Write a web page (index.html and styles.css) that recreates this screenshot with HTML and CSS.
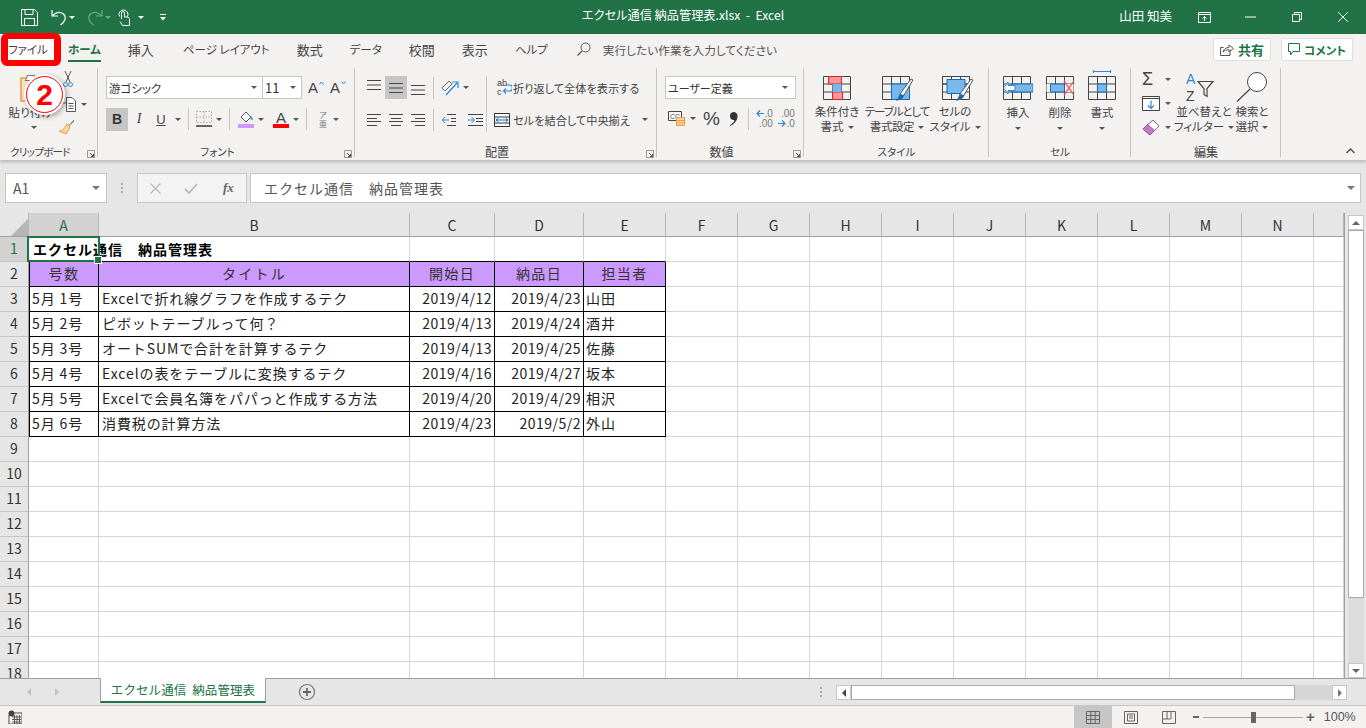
FILE: index.html
```html
<!DOCTYPE html>
<html lang="ja">
<head>
<meta charset="UTF-8">
<title>エクセル通信 納品管理表.xlsx - Excel</title>
<link rel="stylesheet" href="styles.css">
</head>
<body>
<svg class="defs" width="0" height="0">
  <symbol id="launch" viewBox="0 0 8 8"><path d="M.5 7.5V.5h7v7z" fill="none" stroke="#999"/><path d="M3 3l3.5 3.5M6.5 4v2.5H4" fill="none" stroke="#555"/></symbol>
  <symbol id="al-top" viewBox="0 0 14 14"><path d="M0 1.5h14M0 6h14M0 10.500h14" stroke="#444" fill="none"/></symbol>
  <symbol id="al-left" viewBox="0 0 14 14"><path d="M0 1.500h14M0 5.500h10M0 8.500h14M0 12.500h10" stroke="#444" fill="none"/></symbol>
  <symbol id="al-center" viewBox="0 0 14 14"><path d="M0 1.500h14M2 5.500h10M0 8.500h14M2 12.500h10" stroke="#444" fill="none"/></symbol>
  <symbol id="al-right" viewBox="0 0 14 14"><path d="M0 1.500h14M4 5.500h10M0 8.500h14M4 12.500h10" stroke="#444" fill="none"/></symbol>
  <symbol id="cells" viewBox="0 0 28 24"><path d="M.5.500h27v23H.5zM.5 8h27M.5 16h27M9.500.500v23M18.500.500v23" fill="none" stroke="#444"/></symbol>
</svg>

<header class="titlebar">
  <div class="qat">
    <svg width="17" height="17" viewBox="0 0 17 17"><path d="M.5.500h13l3 3v13H.5zM4 .5v5h8v-5M3.500 16.500v-7h10v7" fill="none" stroke="#fff"/></svg>
    <svg class="q-undo" width="16" height="17" viewBox="0 0 16 17"><path d="M1 1v6h6M1.500 7C4 3 9 2.500 12.500 5c3 3 2 7.500-3 11" fill="none" stroke="#fff" stroke-width="1.200"/></svg>
    <i class="dd white"></i>
    <svg class="q-redo" width="16" height="17" viewBox="0 0 16 17"><path d="M15 1v6H9M14.500 7C12 3 7 2.500 3.500 5c-3 3-2 7.500 3 11" fill="none" stroke="#6fa68a" stroke-width="1.200"/></svg>
    <i class="dd dim"></i>
    <svg class="q-touch" width="12" height="17" viewBox="0 0 12 17"><path d="M1.500 7.500a4.500 4.500 0 118 0M3.500 10V4a1.500 1.500 0 013 0v4h2.500c1.500 0 2.500 1 2.500 2.500v6h-7L2 12.500" fill="none" stroke="#fff"/></svg>
    <i class="dd white"></i>
    <svg class="q-more" width="8" height="8" viewBox="0 0 8 8"><path d="M1 1.500h6" stroke="#fff"/><path d="M1 4h6L4 7.500z" fill="#fff"/></svg>
  </div>
  <div class="doc-title">エクセル通信 納品管理表.xlsx &nbsp;-&nbsp; Excel</div>
  <div class="win">
    <span class="user">山田 知美</span>
    <svg class="w-ribbon" width="13" height="11" viewBox="0 0 13 11"><path d="M.5.500h12v10H.5zM.5 2.500h12M6.500 9V4.500M4.500 6.500l2-2 2 2" fill="none" stroke="#fff"/></svg>
    <svg class="w-min" width="11" height="2" viewBox="0 0 11 2"><path d="M0 1h11" stroke="#fff"/></svg>
    <svg class="w-max" width="10" height="10" viewBox="0 0 10 10"><path d="M.5 2.500h7v7h-7zM2.500 2.500v-2h7v7h-2" fill="none" stroke="#fff"/></svg>
    <svg class="w-close" width="10" height="10" viewBox="0 0 10 10"><path d="M0 0l10 10M10 0L0 10" stroke="#fff"/></svg>
  </div>
</header>

<nav class="tabs">
  <span class="tab kn file">ファイル</span>
  <span class="tab kn on">ホーム</span>
  <span class="tab">挿入</span>
  <span class="tab kn page">ページ レイアウト</span>
  <span class="tab">数式</span>
  <span class="tab kn">データ</span>
  <span class="tab">校閲</span>
  <span class="tab">表示</span>
  <span class="tab kn">ヘルプ</span>
  <span class="tell">
    <svg width="14" height="14" viewBox="0 0 14 14"><circle cx="8.500" cy="5.500" r="4.500" fill="none" stroke="#555"/><path d="M5 9l-4.500 4.500" stroke="#555" stroke-width="1.300"/></svg>
    実行したい作業を入力してください
  </span>
  <span class="tab-btns">
    <span class="tbtn t-share"><svg width="14" height="13" viewBox="0 0 14 13"><path d="M10 6.500v6H.5v-8h3M3 9c.5-3 3-4.500 6-4.500V2l4.500 3.500L9 9V6.800C6.500 6.800 4.500 7.500 3 9z" fill="none" stroke="#555"/></svg>共有</span>
    <span class="tbtn t-comment"><svg width="12" height="13" viewBox="0 0 12 13"><path d="M.5.500h11v8H5L2.500 12V8.500h-2z" fill="none" stroke="#217346"/></svg>コメント</span>
  </span>
</nav>

<section class="ribbon">
  <div class="group g-clip">
    <div class="body clip">
      <div class="paste">
        <svg width="22" height="28" viewBox="0 0 22 28"><path d="M1 4h20v23H1z" fill="#fbe3c4" stroke="#ed9a3c" stroke-width="1.500"/><path d="M7 4V1.500h8V4l2 2.500H5z" fill="#fff" stroke="#777"/></svg>
        <span class="lbl">貼り付け</span>
        <i class="dd"></i>
      </div>
      <div class="clip-small">
        <svg width="10" height="17" viewBox="0 0 10 17"><path d="M2 0l5 11M8 0L3 11" stroke="#555" fill="none"/><circle cx="2.500" cy="13.500" r="2" fill="none" stroke="#2b88d8"/><circle cx="7.500" cy="13.500" r="2" fill="none" stroke="#2b88d8"/></svg>
        <span class="copy"><svg width="16" height="15" viewBox="0 0 16 15"><path d="M6.500.500H12l3.500 3.500v10.500h-9zM8.500 6.500h5M8.500 9h5M8.500 11.500h5M1 6h5" fill="#fff" stroke="#555"/></svg><i class="dd"></i></span>
        <svg width="17" height="16" viewBox="0 0 17 16"><path d="M10 7l5.500-6 1 1-6 5.500z" fill="#777"/><path d="M9 5l3 3-4 7-7-3c2 0 5-1 8-7z" fill="#fbd5a5" stroke="#ed9a3c"/></svg>
      </div>
    </div>
    <div class="foot has-launch"><span></span><span class="kn-s long">クリップボード</span><svg class="launch"><use href="#launch"/></svg></div>
  </div>

  <div class="group g-font">
    <div class="body stack">
      <div class="row row-a">
        <span class="select s-font">游ゴシック<i class="dd"></i></span>
        <span class="select s-size">11<i class="dd"></i></span>
        <span class="grow">A<svg width="5" height="4" viewBox="0 0 5 4"><path d="M.5 3.500l2-2.500 2 2.500" fill="none" stroke="#2b88d8"/></svg></span>
        <span class="grow">A<svg width="5" height="4" viewBox="0 0 5 4"><path d="M.5.500l2 2.500 2-2.500" fill="none" stroke="#2b88d8"/></svg></span>
      </div>
      <div class="row row-b">
        <span class="ibtn sel bold">B</span>
        <span class="ibtn ital">I</span>
        <span class="ibtn under">U</span><i class="dd"></i>
        <b class="sep"></b>
        <svg class="bd-ic" width="16" height="16" viewBox="0 0 16 16"><path d="M.5.500h15v11H.5zM8 .5v11M.5 6h15" fill="none" stroke="#aaa" stroke-dasharray="1.500 1.500"/><path d="M0 15h16" stroke="#333" stroke-width="1.500"/></svg><i class="dd"></i>
        <b class="sep"></b>
        <svg class="fill-ic" width="16" height="18" viewBox="0 0 16 18"><path d="M3 7l5-5 5 5-5 5z" fill="#fff" stroke="#555"/><path d="M13 6c1.500 2 2 3 1.500 4.500L12 8z" fill="#2b88d8"/><path d="M0 14h16v4H0z" fill="#cc99ff"/></svg><i class="dd"></i>
        <span class="font-col">A</span><i class="dd"></i>
        <b class="sep"></b>
        <span class="furi">ア<em>亜</em></span><i class="dd"></i>
      </div>
    </div>
    <div class="foot has-launch"><span></span><span class="kn-s">フォント</span><svg class="launch"><use href="#launch"/></svg></div>
  </div>

  <div class="group g-align">
    <div class="body al">
      <div class="al-left">
        <div class="row">
          <span class="ibtn up"><svg width="14" height="14"><use href="#al-top"/></svg></span>
          <span class="ibtn sel"><svg width="14" height="14"><use href="#al-top"/></svg></span>
          <span class="ibtn low"><svg width="14" height="14"><use href="#al-top"/></svg></span>
          <b class="sep"></b>
          <svg class="ori" width="18" height="18" viewBox="0 0 18 18"><path d="M1 9l7-7 3 3-7 7z" fill="none" stroke="#666"/><path d="M5 16L16 4M11 3h6v6" fill="none" stroke="#2b88d8" stroke-width="1.200"/></svg><i class="dd"></i>
        </div>
        <div class="row">
          <span class="ibtn"><svg width="14" height="14"><use href="#al-left"/></svg></span>
          <span class="ibtn"><svg width="14" height="14"><use href="#al-center"/></svg></span>
          <span class="ibtn"><svg width="14" height="14"><use href="#al-right"/></svg></span>
          <b class="sep"></b>
          <svg class="ind" width="15" height="14" viewBox="0 0 15 14"><path d="M6 1.500h9M10 5.500h5M10 8.500h5M6 12.500h9" stroke="#444" fill="none"/><path d="M8 7H1M4 4L1 7l3 3" stroke="#2b88d8" fill="none"/></svg>
          <svg class="ind" width="15" height="14" viewBox="0 0 15 14"><path d="M0 1.500h15M8 5.500h7M8 8.500h7M0 12.500h15" stroke="#444" fill="none"/><path d="M0 7h6M3.500 4L6.500 7l-3 3" stroke="#2b88d8" fill="none"/></svg>
        </div>
      </div>
      <div class="al-right">
        <div class="row wrap-row">
          <svg width="15" height="17" viewBox="0 0 15 17"><path d="M9 6h3.500a2 2 0 010 6H7M9 9.500L6.500 12 9 14.500" fill="none" stroke="#2b88d8" stroke-width="1.200"/><text x="0" y="7" font-size="9" fill="#444" font-family="Liberation Sans">ab</text><text x="0" y="16" font-size="9" fill="#444" font-family="Liberation Sans">c</text></svg>
          <span class="al-txt">折り返して全体を表示する</span>
        </div>
        <div class="row merge-row">
          <svg width="16" height="14" viewBox="0 0 16 14"><path d="M.5.500h15v13H.5z" fill="#fff" stroke="#333"/><path d="M.5 4h15M.5 10h15" stroke="#333"/><path d="M2 7h12M4.500 5L2 7l2.500 2M11.500 5L14 7l-2.500 2" fill="none" stroke="#0f6cbd"/></svg>
          <span class="al-txt">セルを結合して中央揃え</span><i class="dd"></i>
        </div>
      </div>
    </div>
    <div class="foot has-launch"><span></span><span>配置</span><svg class="launch"><use href="#launch"/></svg></div>
  </div>

  <div class="group g-num">
    <div class="body stack">
      <div class="row"><span class="select s-num">ユーザー定義<i class="dd"></i></span></div>
      <div class="row row-num">
        <svg width="17" height="15" viewBox="0 0 17 15"><path d="M.5.500h13v9H.5z" fill="#fff" stroke="#444"/><text x="2" y="8" font-size="7" fill="#444" font-family="Liberation Sans">CC</text><path d="M8.500 6.500h8v8h-8z" fill="#fbd5a5" stroke="#ed9a3c"/><path d="M8.500 9.500h8M8.500 12h8" stroke="#ed9a3c"/></svg><i class="dd"></i>
        <span class="pct">%</span>
        <svg class="comma" width="9" height="14" viewBox="0 0 9 14"><path d="M4.500 0a4 4 0 014 4.500C8.500 8.500 5 12 1.500 14l-.5-.8C3.500 11.500 5 10 5.500 8A4 4 0 114.500 0z" fill="#333"/></svg>
        <b class="sep"></b>
        <span class="dec">
          <span class="d-t"><svg width="8" height="7" viewBox="0 0 8 7"><path d="M8 3.500H1M4 .5l-3 3 3 3" fill="none" stroke="#2b88d8" stroke-width="1.200"/></svg>.0</span>
          <span class="d-g">.00</span>
        </span>
        <span class="dec">
          <span class="d-g">.00</span>
          <span class="d-t"><svg width="8" height="7" viewBox="0 0 8 7"><path d="M0 3.500h7M4 .5l3 3-3 3" fill="none" stroke="#2b88d8" stroke-width="1.200"/></svg>.0</span>
        </span>
      </div>
    </div>
    <div class="foot has-launch"><span></span><span>数値</span><svg class="launch"><use href="#launch"/></svg></div>
  </div>

  <div class="group g-style">
    <div class="body bigs">
      <div class="big b1">
        <svg width="28" height="24" viewBox="0 0 28 24"><use href="#cells"/><path d="M5.500.500h13V8h-13zM9.500 16h10v7.500h-10z" fill="#ff9999" stroke="#e02020"/><path d="M9.500 8h9v8h-9z" fill="#7ab7ea"/></svg>
        <span class="lbl">条件付き<br>書式<i class="dd"></i></span>
      </div>
      <div class="big b2">
        <svg width="32" height="26" viewBox="0 0 32 26"><use href="#cells" width="28" height="24"/><path d="M9.500 8h18v15.500h-18z" fill="#7ab7ea" stroke="#0f6cbd"/><path d="M18 18L29 3l2 1-9 15c-1 4-5 5-8 5 3-1 3-4 4-6z" fill="#fff" stroke="#555"/><path d="M18 18c-1 2-1 5-4 6 3 0 7-1 8-5z" fill="#0f6cbd"/></svg>
        <span class="lbl tight">テーブルとして<br>書式設定<i class="dd"></i></span>
      </div>
      <div class="big b3">
        <svg width="32" height="26" viewBox="0 0 32 26"><use href="#cells" width="28" height="24"/><path d="M.5.500h27V8H.5z" fill="none" stroke="#444"/><path d="M5 3.500h18v14H5z" fill="#7ab7ea" stroke="#0f6cbd"/><path d="M18 18L29 3l2 1-9 15c-1 4-5 5-8 5 3-1 3-4 4-6z" fill="#fff" stroke="#555"/><path d="M18 18c-1 2-1 5-4 6 3 0 7-1 8-5z" fill="#0f6cbd"/></svg>
        <span class="lbl">セルの<br>スタイル<i class="dd"></i></span>
      </div>
    </div>
    <div class="foot"><span></span><span class="kn-s">スタイル</span><span></span></div>
  </div>

  <div class="group g-cell">
    <div class="body bigs">
      <div class="big c1">
        <svg width="30" height="24" viewBox="0 0 30 24"><use href="#cells" width="28" height="24"/><path d="M8 8h22v8H8z" fill="#7ab7ea" stroke="#0f6cbd"/><path d="M12 9.500H5V6L.5 12 5 18v-3.500h7z" fill="#fff" stroke="#2b88d8"/></svg>
        <span class="lbl">挿入</span><i class="dd"></i>
      </div>
      <div class="big c2">
        <svg width="28" height="24" viewBox="0 0 28 24"><use href="#cells"/><path d="M.5 8h27v8H.5z" fill="#f3f2f1"/><path d="M4.500 8h14v8h-14z" fill="#7ab7ea" stroke="#0f6cbd"/><path d="M18 5l10 14M28 5L18 19" stroke="#f25c5c" stroke-width="1.300"/></svg>
        <span class="lbl">削除</span><i class="dd"></i>
      </div>
      <div class="big c3">
        <svg width="28" height="30" viewBox="0 0 28 30"><path d="M5.500 0v3M22.500 0v3M5.500 1.500h17" stroke="#2b88d8" fill="none"/><use href="#cells" y="6" width="28" height="24"/><path d="M9.500 14h9v8h-9z" fill="#7ab7ea" stroke="#0f6cbd"/></svg>
        <span class="lbl">書式</span><i class="dd"></i>
      </div>
    </div>
    <div class="foot"><span></span><span class="kn-s">セル</span><span></span></div>
  </div>

  <div class="group g-edit">
    <div class="body edit">
      <div class="edit-small">
        <span class="es"><span class="sum">Σ</span><i class="dd"></i></span>
        <span class="es"><svg width="18" height="15" viewBox="0 0 18 15"><path d="M.5.500h17v14H.5zM.5 2.500h17" fill="#fff" stroke="#444"/><path d="M9 4.500v8M6 9.500l3 3 3-3" fill="none" stroke="#2b88d8" stroke-width="1.200"/></svg><i class="dd"></i></span>
        <span class="es"><svg width="18" height="17" viewBox="0 0 18 17"><path d="M11 1l6 6-9 9-7-6z" fill="#fff" stroke="#a64ca6"/><path d="M5.500 5.500l7 6L8 16l-7-6z" fill="#c27cc2" stroke="#a64ca6"/></svg><i class="dd"></i></span>
      </div>
      <div class="big e1">
        <svg width="32" height="30" viewBox="0 0 32 30"><text x="0" y="12" font-size="14" fill="#2b88d8" font-family="Liberation Sans">A</text><text x="0" y="29" font-size="14" fill="#444" font-family="Liberation Sans">Z</text><path d="M12 9.500h15l-6 7v8l-3-2v-6z" fill="none" stroke="#444" stroke-width="1.200"/></svg>
        <span class="lbl">並べ替えと<br>フィルター<i class="dd"></i></span>
      </div>
      <div class="big e2">
        <svg width="32" height="30" viewBox="0 0 32 30"><circle cx="21" cy="10" r="9.500" fill="#fff" stroke="#444"/><path d="M14 17L1 29.500" stroke="#444" stroke-width="1.200"/></svg>
        <span class="lbl">検索と<br>選択<i class="dd"></i></span>
      </div>
    </div>
    <div class="foot"><span></span><span>編集</span><span></span></div>
  </div>

  <div class="collapse"><svg width="9" height="6" viewBox="0 0 9 6"><path d="M.5 5l4-4 4 4" fill="none" stroke="#555" stroke-width="1.500"/></svg></div>
</section>

<section class="formula">
  <div class="namebox">A1<i class="dd big-dd"></i></div>
  <div class="dots"></div>
  <div class="fx-btns">
    <svg width="11" height="11" viewBox="0 0 11 11"><path d="M.5.500l10 10M10.500.500l-10 10" stroke="#bbb" stroke-width="1.300"/></svg>
    <svg width="14" height="11" viewBox="0 0 14 11"><path d="M1 6l4 4 8-9" fill="none" stroke="#bbb" stroke-width="1.800"/></svg>
    <span class="fx">fx</span>
  </div>
  <div class="fbar">エクセル通信　納品管理表<i class="dd big-dd"></i></div>
</section>

<main class="sheet">
  <div class="grid-wrap">
    <table class="grid">
      <colgroup><col class="c-h"><col class="c-a"><col class="c-b"><col class="c-c"><col class="c-d"><col class="c-e"><col class="c-n"><col class="c-n"><col class="c-n"><col class="c-n"><col class="c-n"><col class="c-n"><col class="c-n"><col class="c-n"><col class="c-n"><col class="c-z"></colgroup>
      <tr class="heads"><th class="corner"><svg width="17" height="17" viewBox="0 0 17 17"><path d="M17 0v17H0z" fill="#b5b5b5"/></svg></th><th class="cur">A</th><th>B</th><th>C</th><th>D</th><th>E</th><th>F</th><th>G</th><th>H</th><th>I</th><th>J</th><th>K</th><th>L</th><th>M</th><th>N</th><th></th></tr>
      <tr><th class="cur">1</th><td class="active title under-b">エクセル通信　納品管理表<span class="selbox"></span></td><td class="under-b no-l"></td><td class="under-b"></td><td class="under-b"></td><td class="under-b"></td><td></td><td></td><td></td><td></td><td></td><td></td><td></td><td></td><td></td><td></td></tr>
      <tr class="tbl hd"><th>2</th><td>号数</td><td>タイトル</td><td>開始日</td><td>納品日</td><td>担当者</td><td></td><td></td><td></td><td></td><td></td><td></td><td></td><td></td><td></td><td></td></tr>
      <tr class="tbl"><th>3</th><td>5月 1号</td><td>Excelで折れ線グラフを作成するテク</td><td class="r">2019/4/12</td><td class="r">2019/4/23</td><td>山田</td><td></td><td></td><td></td><td></td><td></td><td></td><td></td><td></td><td></td><td></td></tr>
      <tr class="tbl"><th>4</th><td>5月 2号</td><td>ピボットテーブルって何？</td><td class="r">2019/4/13</td><td class="r">2019/4/24</td><td>酒井</td><td></td><td></td><td></td><td></td><td></td><td></td><td></td><td></td><td></td><td></td></tr>
      <tr class="tbl"><th>5</th><td>5月 3号</td><td>オートSUMで合計を計算するテク</td><td class="r">2019/4/13</td><td class="r">2019/4/25</td><td>佐藤</td><td></td><td></td><td></td><td></td><td></td><td></td><td></td><td></td><td></td><td></td></tr>
      <tr class="tbl"><th>6</th><td>5月 4号</td><td>Excelの表をテーブルに変換するテク</td><td class="r">2019/4/16</td><td class="r">2019/4/27</td><td>坂本</td><td></td><td></td><td></td><td></td><td></td><td></td><td></td><td></td><td></td><td></td></tr>
      <tr class="tbl"><th>7</th><td>5月 5号</td><td>Excelで会員名簿をパパっと作成する方法</td><td class="r">2019/4/20</td><td class="r">2019/4/29</td><td>相沢</td><td></td><td></td><td></td><td></td><td></td><td></td><td></td><td></td><td></td><td></td></tr>
      <tr class="tbl"><th>8</th><td>5月 6号</td><td>消費税の計算方法</td><td class="r">2019/4/23</td><td class="r">2019/5/2</td><td>外山</td><td></td><td></td><td></td><td></td><td></td><td></td><td></td><td></td><td></td><td></td></tr>
      <tr><th>9</th><td></td><td></td><td></td><td></td><td></td><td></td><td></td><td></td><td></td><td></td><td></td><td></td><td></td><td></td><td></td></tr>
      <tr><th>10</th><td></td><td></td><td></td><td></td><td></td><td></td><td></td><td></td><td></td><td></td><td></td><td></td><td></td><td></td><td></td></tr>
      <tr><th>11</th><td></td><td></td><td></td><td></td><td></td><td></td><td></td><td></td><td></td><td></td><td></td><td></td><td></td><td></td><td></td></tr>
      <tr><th>12</th><td></td><td></td><td></td><td></td><td></td><td></td><td></td><td></td><td></td><td></td><td></td><td></td><td></td><td></td><td></td></tr>
      <tr><th>13</th><td></td><td></td><td></td><td></td><td></td><td></td><td></td><td></td><td></td><td></td><td></td><td></td><td></td><td></td><td></td></tr>
      <tr><th>14</th><td></td><td></td><td></td><td></td><td></td><td></td><td></td><td></td><td></td><td></td><td></td><td></td><td></td><td></td><td></td></tr>
      <tr><th>15</th><td></td><td></td><td></td><td></td><td></td><td></td><td></td><td></td><td></td><td></td><td></td><td></td><td></td><td></td><td></td></tr>
      <tr><th>16</th><td></td><td></td><td></td><td></td><td></td><td></td><td></td><td></td><td></td><td></td><td></td><td></td><td></td><td></td><td></td></tr>
      <tr><th>17</th><td></td><td></td><td></td><td></td><td></td><td></td><td></td><td></td><td></td><td></td><td></td><td></td><td></td><td></td><td></td></tr>
      <tr><th>18</th><td></td><td></td><td></td><td></td><td></td><td></td><td></td><td></td><td></td><td></td><td></td><td></td><td></td><td></td><td></td></tr>
    </table>
  </div>
  <div class="vscroll">
    <span class="sbtn"><i class="tri-up"></i></span>
    <span class="vthumb"></span>
    <span class="vtrack"></span>
    <span class="sbtn"><i class="tri-down"></i></span>
  </div>
</main>

<section class="sheetbar">
  <div class="nav-arrows"><i class="tri-left"></i><i class="tri-right gray"></i></div>
  <div class="sheet-tab">エクセル通信&nbsp; 納品管理表</div>
  <svg class="add" width="18" height="18" viewBox="0 0 18 18"><circle cx="9" cy="9" r="7.500" fill="none" stroke="#777" stroke-width="1.200"/><path d="M9 5v8M5 9h8" stroke="#666" stroke-width="1.800"/></svg>
  <div class="dots small"></div>
  <div class="hscroll">
    <span class="sbtn h"><i class="tri-left dark"></i></span>
    <span class="hthumb"></span>
    <span class="htrack"></span>
    <span class="sbtn h"><i class="tri-right dark"></i></span>
  </div>
</section>

<footer class="status">
  <svg class="macro" width="14" height="14" viewBox="0 0 14 14"><path d="M3 3h11v11H1V5" fill="#fff" stroke="#444"/><path d="M4 7h9M4 9.500h9M4 12h9M6.500 5v9M9 5v9M11.500 5v9" stroke="#555"/><circle cx="3.500" cy="3.500" r="3" fill="#444"/></svg>
  <div class="views">
    <span class="view sel"><svg width="14" height="13" viewBox="0 0 14 13"><path d="M.5.500h13v12H.5zM.5 4.500h13M.5 8.500h13M4.800.5v12M9.200.5v12" fill="none" stroke="#666"/></svg></span>
    <span class="view"><svg width="14" height="13" viewBox="0 0 14 13"><path d="M.5.500h13v12H.5z" fill="none" stroke="#666"/><path d="M3.500 3v7h7V3zM5 5h4M5 7h4" fill="none" stroke="#666"/></svg></span>
    <span class="view"><svg width="14" height="13" viewBox="0 0 14 13"><path d="M.5.500h13v12H.5zM.5 8h8.500V.5M5 .5V8" fill="none" stroke="#666"/></svg></span>
  </div>
  <div class="zoom">
    <i class="z-minus"></i>
    <span class="slider"><i></i></span>
    <span class="z-plus">+</span>
    <span class="pctz">100%</span>
  </div>
</footer>

<div class="step"><span>2</span></div>
</body>
</html>
```

FILE: styles.css
```css
*{box-sizing:border-box;}
html,body{margin:0;height:100%;}
body{
    width:1366px;
    height:728px;
    overflow:hidden;
    display:flex;
    flex-direction:column;
    background:#e6e6e6;
    color:#444;
    font-family:"Noto Sans CJK JP","Liberation Sans",sans-serif;
    font-size:12px;
    font-feature-settings:"palt";
}
svg{display:block;flex:none;}
.defs{position:absolute;}
i,em{font-style:normal;}

/* dropdown arrow */
.dd{
    display:inline-block;
    flex:none;
    width:0;
    height:0;
    border-left:3px solid transparent;
    border-right:3px solid transparent;
    border-top:3px solid #555;
}
.dd.white{border-top-color:#fff;}
.dd.dim{border-top-color:#6fa68a;}
.dd.big-dd{border-left-width:4px;border-right-width:4px;border-top-width:4px;border-top-color:#777;}

/* title bar */
.titlebar{
    flex:none;
    height:34px;
    background:#217346;
    color:#fff;
    display:grid;
    grid-template-columns:1fr auto 1fr;
    align-items:center;
}
.qat{display:flex;align-items:center;padding-left:21px;}
.q-undo{margin-left:13px;}
.qat .dd{margin-left:2px;}
.q-redo{margin-left:12px;}
.q-touch{margin-left:7px;}
.q-touch + .dd{margin-left:8px;}
.q-more{margin-left:15px;}
.doc-title{font-size:12.2px;padding-bottom:4px;}
.win{display:flex;align-items:center;justify-content:flex-end;padding-right:18px;}
.user{font-size:12.5px;margin-right:26px;padding-bottom:4px;margin-left:3px;}
.w-min{margin-left:34px;}
.w-max{margin-left:36px;}
.w-close{margin-left:36px;}

/* tabs */
.tabs{
    flex:none;
    height:30px;
    background:#f3f2f1;
    display:flex;
    gap:27px;
    padding-left:8px;
    position:relative;
    z-index:3;
}
.tab{
    height:24px;
    line-height:21px;
    padding-top:1px;
    margin-top:4px;
    border-bottom:2px solid transparent;
    font-size:13px;
    white-space:nowrap;
}
.tab.kn{font-size:11.5px;}
.tab.page{margin-left:2px;}
.tab.on{color:#217346;border-bottom-color:#217346;font-weight:700;}
.tab.file{position:relative;width:33px;z-index:1;}
.tab.file::before{
    content:"";
    position:absolute;
    left:-7px;
    right:-20px;
    top:-5px;
    bottom:-6px;
    border:6px solid #f00;
    border-width:6px 7px 6px 7px;
    border-radius:6px;
    background:#fff;
    z-index:-1;
}
.tell{
    display:flex;
    align-items:center;
    gap:12px;
    margin-left:2px;
    height:30px;
    font-size:11.7px;
    color:#555;
}
.tab-btns{margin-left:auto;display:flex;gap:10px;padding:4px 13px 0 0;}
.tbtn{
    display:flex;
    align-items:center;
    justify-content:center;
    gap:4px;
    height:23px;
    background:#fff;
    border:1px solid #e1dfdd;
    border-radius:2px;
    color:#217346;
    font-weight:700;
    font-size:13px;
    white-space:nowrap;
}
.t-share{width:58px;}
.t-comment{width:72px;font-size:11.5px;}

/* ribbon */
.ribbon{
    flex:none;
    height:96px;
    background:#f3f2f1;
    display:flex;
    box-shadow:0 2px 3px rgba(0,0,0,.2);
    position:relative;
    z-index:2;
}
.group{
    display:flex;
    flex-direction:column;
    height:96px;
    background:linear-gradient(#c8c6c4,#c8c6c4) right 4px/1px 89px no-repeat;
}
.g-clip{width:98px;}
.g-font{width:257px;}
.g-align{width:302px;}
.g-num{width:147px;}
.g-style{width:185px;}
.g-cell{width:142px;}
.g-edit{width:150px;}
.body{flex:1;padding-top:12px;min-height:0;}
.foot{
    flex:none;
    height:14px;
    margin-bottom:1px;
    display:grid;
    grid-template-columns:1fr auto 1fr;
    align-items:center;
    font-size:12px;
    line-height:14px;
    color:#444;
}
.foot.has-launch{padding-right:18px;}
.kn-s{font-size:10.5px;}
.kn-s.long{letter-spacing:-.7px;}
.launch{width:8px;height:8px;justify-self:end;margin:3px -15px 0 0;}
.row{display:flex;align-items:center;height:23px;}
.stack{display:flex;flex-direction:column;gap:8px;}
.sep{display:block;flex:none;width:1px;height:22px;background:#c8c6c4;}
.ibtn{
    flex:none;
    width:22px;
    height:23px;
    display:flex;
    align-items:center;
    justify-content:center;
}
.ibtn.sel{background:#c6c6c6;}
.select{
    display:flex;
    align-items:center;
    justify-content:space-between;
    height:23px;
    background:#fff;
    border:1px solid #c6c6c6;
    padding:0 5px 0 2px;
    font-size:12px;
    color:#333;
}

/* clipboard */
.clip{display:flex;padding-top:10px;}
.paste{
    width:57px;
    display:flex;
    flex-direction:column;
    align-items:center;
    margin-left:2px;
}
.paste .lbl{margin-top:3px;}
.paste .dd{margin:6px 0 0 6px;}
.lbl{font-size:11.5px;line-height:14.500px;color:#444;text-align:center;white-space:nowrap;}
.lbl.tight{letter-spacing:-.4px;}
.lbl.tight:first-line{letter-spacing:-1.100px;}
.lbl .dd{margin-left:4px;vertical-align:2px;}
.clip-small{display:flex;flex-direction:column;gap:9px;margin-top:-3px;padding-left:2px;align-items:flex-start;}
.clip-small svg:first-child{margin-left:2px;}
.copy{display:flex;align-items:center;margin:0 0 -2px -3px;}
.copy .dd{margin-left:5px;}
.clip-small > svg:last-child{margin-left:-3px;}

/* font */
.g-font .body{padding-left:8px;}
.s-font{width:157px;font-size:11.5px;}
.s-size{width:40px;font-size:13px;margin-left:-1px;}
.grow{
    font-family:"Liberation Sans",sans-serif;
    font-size:15px;
    width:21px;
    margin-left:6px;
    color:#444;
    line-height:23px;
    display:flex;
    gap:1px;
}
.grow svg{margin-top:5px;}
.grow + .grow{margin-left:1px;}
.row-b{height:24px;}
.row-b .dd{margin-left:4px;}
.bold{font-weight:700;font-family:"Liberation Sans",sans-serif;font-size:14px;color:#333;}
.ital{font-style:italic;font-family:"Liberation Serif",serif;font-size:14px;}
.under{text-decoration:underline;font-family:"Liberation Sans",sans-serif;font-size:13px;margin-right:-1px;}
.row-b .sep{margin:0 7px;}
.font-col{
    width:16px;
    margin-left:9px;
    font-family:"Liberation Sans",sans-serif;
    font-size:15px;
    line-height:13px;
    text-align:center;
    border-bottom:4px solid #f00;
}
.fill-ic{margin-left:1px;}
.furi{
    width:14px;
    margin-left:2px;
    font-size:8px;
    line-height:9px;
    text-align:center;
    color:#777;
}
.furi em{display:block;}
.furi + .dd{margin-left:3px;}

/* alignment */
.al{display:flex;padding-left:8px;}
.al-left{width:124px;border-right:1px solid #c8c6c4;height:56px;display:flex;flex-direction:column;gap:9px;}
.al-left .sep{margin:0 7px 0 4px;}
.ibtn.low svg{margin-top:7px;}
.ibtn.up svg{margin-top:-3px;}
.ibtn.sel svg{margin-top:3px;}
.ori + .dd{margin-left:4px;}
.ind + .ind{margin-left:12px;}
.al-right{display:flex;flex-direction:column;gap:9px;padding-left:7px;}
.wrap-row{gap:1px;padding-left:3px;}
.merge-row{gap:3px;}
.al-txt{font-size:11.2px;white-space:nowrap;}
.merge-row .dd{margin-left:9px;}

/* number */
.g-num .body{padding-left:8px;}
.s-num{width:131px;padding:0 7px 0 2px;font-size:11px;}
.row-num{padding-left:3px;}
.row-num > .dd{margin-left:5px;}
.pct{font-family:"Liberation Sans",sans-serif;font-size:19px;margin-left:7px;line-height:23px;}
.comma{margin-left:9px;}
.row-num .sep{margin:0 8px 0 10px;}
.dec{
    width:16px;
    margin-right:6px;
    font-family:"Liberation Sans",sans-serif;
    font-size:10px;
    line-height:10px;
    color:#777;
    white-space:nowrap;
}
.d-t,.d-g{display:flex;align-items:center;justify-content:flex-end;}
.d-t svg{margin-right:1px;}

/* big buttons */
.bigs{display:flex;}
.big{display:flex;flex-direction:column;align-items:center;}
.b1{width:62px;margin-left:2px;}
.b1 svg{margin-bottom:4px;}
.b2 svg,.b3 svg{margin-bottom:2px;}
.b2{width:58px;}
.b3{width:50px;margin-left:4px;}
.b2 svg{margin-left:2px;}
.b3 svg{margin-left:5px;}
.c1,.c2,.c3{width:42px;}
.c1{margin-left:8px;}
.c1 svg,.c2 svg{margin:0 0 5px;}
.c3{margin-top:-6px;}
.c3 svg{margin:0 0 5px;}
.c1 .dd,.c2 .dd,.c3 .dd{margin-top:7px;}
.edit{display:flex;padding-top:8px;}
.edit-small{width:46px;padding:0 0 0 11px;margin-top:-3px;display:flex;flex-direction:column;gap:4px;}
.es{display:flex;align-items:center;height:20px;gap:5px;}
.sum{width:18px;font-family:"Liberation Sans",sans-serif;font-size:18px;line-height:18px;}
.e1{width:54px;}
.e1 svg{margin:0 0 2px -4px;}
.e2{width:42px;}
.e2 svg{margin-bottom:2px;}
.collapse{flex:1;display:flex;align-items:flex-end;justify-content:flex-end;padding:0 11px 6px 0;}

/* formula bar */
.formula{
    flex:none;
    height:53px;
    padding:13px 5px 10px;
    display:flex;
    align-items:stretch;
}
.namebox{
    width:102px;
    background:#fff;
    border:1px solid #c6c6c6;
    display:flex;
    align-items:center;
    justify-content:space-between;
    padding:0 6px 0 7px;
    font-size:14px;
    color:#555;
}
.dots{
    flex:none;
    width:2px;
    height:10px;
    margin:10px 14px 0;
    background:repeating-linear-gradient(#aaa 0 2px,transparent 2px 4px);
}
.fx-btns{
    width:110px;
    background:#f3f3f3;
    border:1px solid #c6c6c6;
    display:flex;
    align-items:center;
    padding-left:12px;
    gap:23px;
}
.fx{font-family:"Liberation Serif",serif;font-style:italic;font-weight:700;font-size:13px;color:#666;margin-left:2px;}
.fbar{
    flex:1;
    margin-left:3px;
    background:#fff;
    border:1px solid #c6c6c6;
    display:flex;
    align-items:center;
    justify-content:space-between;
    padding:0 5px 0 13px;
    font-size:14px;
    color:#555;
    letter-spacing:1px;
    font-feature-settings:normal;
}

/* sheet */
.sheet{flex:none;height:465px;display:flex;overflow:hidden;}
.grid-wrap{width:1344px;height:465px;overflow:hidden;background:#fff;}
.grid{
    table-layout:fixed;
    width:1344px;
    border-collapse:separate;
    border-spacing:0;
    font-size:14px;
    font-feature-settings:normal;
    color:#222;
}
.c-h{width:29px;}
.c-a{width:70px;}
.c-b{width:311px;}
.c-c{width:85px;}
.c-d{width:89px;}
.c-e{width:82px;}
.c-n{width:72px;}
.c-z{width:30px;}
.grid tr{height:25px;}
.grid .heads{height:24px;}
.grid th{
    padding:0 0 2px;
    font-weight:400;
    text-align:center;
    background:#e6e6e6;
    border-right:1px solid #9f9f9f;
    border-bottom:1px solid #c6c6c6;
    color:#333;
    font-size:14px;
    line-height:20px;
}
.grid .heads th{
    padding:0;
    border-right:1px solid #b5b5b5;
    border-bottom:1px solid #9f9f9f;
}
.grid th.cur{background:#d2d2d2;color:#217346;}
.corner svg{margin:6px 0 0 11px;}
.grid td{
    padding:0 2px;
    border-right:1px solid #d4d4d4;
    border-bottom:1px solid #d4d4d4;
    white-space:nowrap;
    overflow:visible;
    letter-spacing:.9px;
    line-height:20px;
}
.grid td.under-b{border-bottom-color:#000;}
.grid td.no-l{border-right-color:#d4d4d4;}
.grid td.active{position:relative;border-right-color:transparent;padding-left:4px;}
.grid td.title{font-weight:700;color:#000;letter-spacing:1px;}
.selbox{
    position:absolute;
    left:-2px;
    top:-1px;
    width:73px;
    height:26px;
    border:2px solid #217346;
}
.selbox::after{
    content:"";
    position:absolute;
    right:-4px;
    bottom:-4px;
    width:6px;
    height:6px;
    background:#217346;
    border:1px solid #fff;
}
.tbl td{padding-bottom:3px;}
.tbl td:nth-child(3){padding-left:3px;}
.tbl td:nth-child(-n+6){border-right-color:#000;border-bottom-color:#000;}
.tbl td:nth-child(2){border-left:1px solid #000;}
.hd td:nth-child(-n+6){background:#cc99ff;text-align:center;letter-spacing:1.400px;color:#333;}
.hd td:nth-child(3){letter-spacing:2.200px;}
.grid td.r{text-align:right;letter-spacing:.5px;padding-right:2px;}

/* scrollbars */
.vscroll{
    width:22px;
    border-left:1px solid #9f9f9f;
    padding:2px 2px 0 3px;
    display:flex;
    flex-direction:column;
    background:#e6e6e6;
}
.sbtn{
    flex:none;
    width:16px;
    height:15px;
    background:#fff;
    border:1px solid #c6c6c6;
    display:flex;
    align-items:center;
    justify-content:center;
}
.vthumb{flex:none;height:368px;background:#fff;border:1px solid #ababab;}
.vtrack{flex:1;background:#dcdcdc;}
.tri-up,.tri-down,.tri-left,.tri-right{display:block;width:0;height:0;border:4px solid transparent;}
.tri-up{border-bottom-color:#666;border-top-width:0;}
.tri-down{border-top-color:#666;border-bottom-width:0;}
.tri-left{border-right-color:#c0c0c0;border-left-width:0;}
.tri-right{border-left-color:#c0c0c0;border-right-width:0;}
.tri-left.dark{border-right-color:#444;}
.tri-right.dark{border-left-color:#777;}

/* sheet tabs */
.sheetbar{
    flex:none;
    height:28px;
    display:flex;
    align-items:flex-start;
    border-top:1px solid #9f9f9f;
    border-bottom:1px solid #c6c6c6;
    background:#e6e6e6;
}
.nav-arrows{width:100px;display:flex;padding:9px 0 0 27px;gap:24px;}
.sheet-tab{
    width:166px;
    height:25px;
    margin-top:-1px;
    background:#fff;
    border-left:1px solid #9f9f9f;
    border-right:1px solid #9f9f9f;
    border-bottom:2px solid #217346;
    color:#217346;
    text-align:center;
    font-size:12.5px;
    line-height:24px;
    letter-spacing:.1px;
    font-feature-settings:normal;
}
.add{margin:4px 0 0 32px;}
.dots.small{margin:8px 0 0 504px;}
.hscroll{
    display:flex;
    margin-left:14px;
    margin-top:6px;
}
.sbtn.h{width:15px;height:15px;}
.hthumb{width:444px;height:15px;background:#fff;border:1px solid #ababab;}
.htrack{width:37px;height:15px;background:#d6d6d6;}

/* status bar */
.status{
    flex:none;
    height:22px;
    background:#f3f2f1;
    display:flex;
    align-items:center;
    padding-left:8px;
}
.views{margin-left:1052px;display:flex;height:22px;}
.view{width:38px;display:flex;align-items:center;justify-content:center;}
.view.sel{background:#c6c6c6;}
.zoom{display:flex;align-items:center;margin-left:5px;}
.z-minus{display:block;width:6px;height:2px;background:#666;}
.slider{display:flex;align-items:center;justify-content:center;width:100px;height:1px;background:#a8a8a8;margin-left:4px;}
.slider i{display:block;flex:none;width:5px;height:11px;background:#666;}
.z-plus{font-family:"Liberation Sans",sans-serif;font-size:15px;font-weight:700;color:#666;margin-left:3px;line-height:14px;}
.pctz{margin-left:9px;font-family:"Liberation Sans",sans-serif;font-size:12.5px;color:#555;}

/* numbered step marker over the paste button */
.step{
    position:absolute;
    left:26px;
    top:76px;
    width:37px;
    height:37px;
    border-radius:50%;
    background:#fff;
    box-shadow:0 0 0 2px #fff,2px 2px 5px 2px rgba(0,0,0,.3);
    border:1px solid #f00;
    color:#f00;
    font-family:"Liberation Sans",sans-serif;
    font-weight:700;
    font-size:30px;
    line-height:35px;
    text-align:center;
    z-index:5;
}
```
